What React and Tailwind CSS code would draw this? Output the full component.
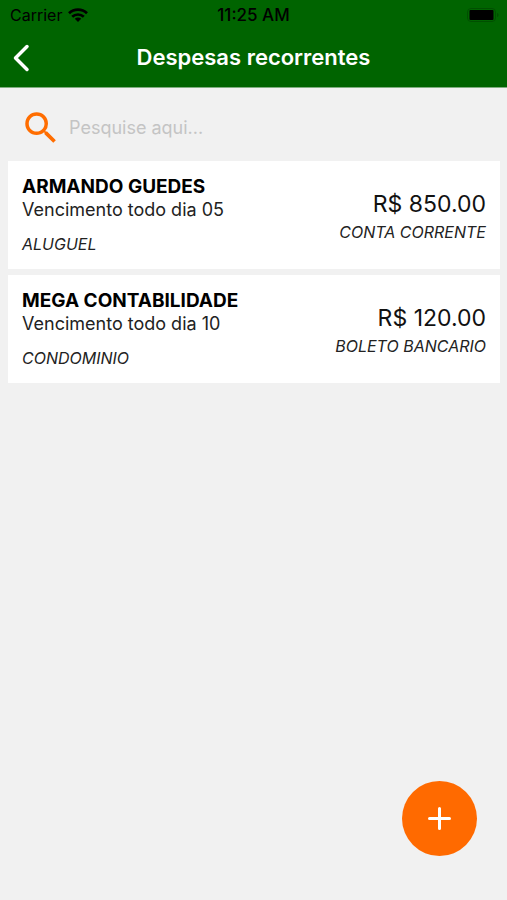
import React, { useState } from "react";
import { MdSearch } from "react-icons/md";

const expenses = [
	{
		id: 1,
		name: "ARMANDO GUEDES",
		dueDay: "05",
		category: "ALUGUEL",
		value: 850,
		payment: "CONTA CORRENTE",
	},
	{
		id: 2,
		name: "MEGA CONTABILIDADE",
		dueDay: "10",
		category: "CONDOMINIO",
		value: 120,
		payment: "BOLETO BANCARIO",
	},
];

const WifiIcon = () => (
	<svg width="20" height="14" viewBox="0 0 20 14" aria-hidden="true">
		<g fill="none" stroke="currentColor" strokeWidth="2.7">
			<path d="M1 5.2a13 13 0 0 1 18 0" />
			<path d="M4.2 8.8a8.4 8.4 0 0 1 11.6 0" />
		</g>
		<path d="M10 14l-3.2-3.2a4.6 4.6 0 0 1 6.4 0z" fill="currentColor" />
	</svg>
);

const BatteryIcon = () => (
	<svg width="32" height="14" viewBox="0 0 32 14" aria-hidden="true">
		<rect
			x="0.5"
			y="0.5"
			width="28"
			height="13"
			rx="3.5"
			fill="none"
			stroke="#004f00"
		/>
		<rect x="2.5" y="2" width="24" height="10" rx="1" fill="#000" />
		<path d="M30 5v4c1-.4 1.6-1.1 1.6-2s-.6-1.6-1.6-2z" fill="#004f00" />
	</svg>
);

const StatusBar = () => (
	<div className="grid grid-cols-3 items-center h-7 px-2 pt-0.5 text-black">
		<div className="flex items-center gap-1.5 pl-0.5 text-base leading-6">
			<span>Carrier</span>
			<WifiIcon />
		</div>
		<span className="text-center text-[17px] leading-6 font-medium">
			11:25 AM
		</span>
		<div className="flex justify-end">
			<BatteryIcon />
		</div>
	</div>
);

const Header = () => (
	<header className="bg-[#006400] border-b border-[#7fae7f]">
		<StatusBar />
		<div className="grid grid-cols-[40px_1fr_40px] items-center h-[59px]">
			<button type="button" aria-label="Voltar" className="pl-3 text-white">
				<svg width="18" height="28" viewBox="0 0 18 28" aria-hidden="true">
					<path
						d="M15 2.5L3.5 14L15 25.5"
						fill="none"
						stroke="currentColor"
						strokeWidth="3.5"
						strokeLinecap="round"
						strokeLinejoin="round"
					/>
				</svg>
			</button>
			<h1 className="text-center text-white text-[22px] font-semibold">
				Despesas recorrentes
			</h1>
		</div>
	</header>
);

const ExpenseCard = ({ expense }) => (
	<li className="flex items-center justify-between bg-white px-3.5 py-3.5 text-[#222]">
		<div>
			<h2 className="text-[19px] leading-[23px] font-bold text-black">
				{expense.name}
			</h2>
			<p className="text-lg leading-[23px]">
				Vencimento todo dia {expense.dueDay}
			</p>
			<p className="mt-3 text-base leading-[22px] italic">{expense.category}</p>
		</div>
		<div className="text-right">
			<p className="text-[23px] leading-[34px] text-[#111]">
				R$ {expense.value.toFixed(2)}
			</p>
			<p className="text-base leading-[22px] italic">{expense.payment}</p>
		</div>
	</li>
);

const App = () => {
	const [search, setSearch] = useState("");

	const filtered = expenses.filter((expense) =>
		expense.name.toLowerCase().includes(search.toLowerCase())
	);

	return (
		<div className="min-h-screen bg-[#f1f1f1] font-['Inter',sans-serif]">
			<Header />
			<main className="pl-2 pr-[7px]">
				<label className="flex items-center gap-[7px] h-[73px] pl-3 pt-1.5">
					<MdSearch className="size-[42px] shrink-0 text-[#ff6d00]" />
					<input
						type="text"
						aria-label="Pesquisar"
						placeholder="Pesquise aqui..."
						value={search}
						onChange={(e) => setSearch(e.target.value)}
						className="flex-1 min-w-0 bg-transparent text-lg outline-none placeholder:text-[#c4c4c4]"
					/>
				</label>
				<ul className="flex flex-col gap-1.5">
					{filtered.map((expense) => (
						<ExpenseCard key={expense.id} expense={expense} />
					))}
				</ul>
			</main>
			<button
				type="button"
				aria-label="Adicionar despesa"
				className="fixed right-[30px] bottom-11 flex items-center justify-center size-[75px] rounded-full bg-[#ff6a00] text-white"
			>
				<svg width="25" height="25" viewBox="0 0 25 25" aria-hidden="true">
					<path
						d="M12.5 2.5v20M2.5 12.5h20"
						fill="none"
						stroke="currentColor"
						strokeWidth="3"
						strokeLinecap="round"
					/>
				</svg>
			</button>
		</div>
	);
};

export default App;
